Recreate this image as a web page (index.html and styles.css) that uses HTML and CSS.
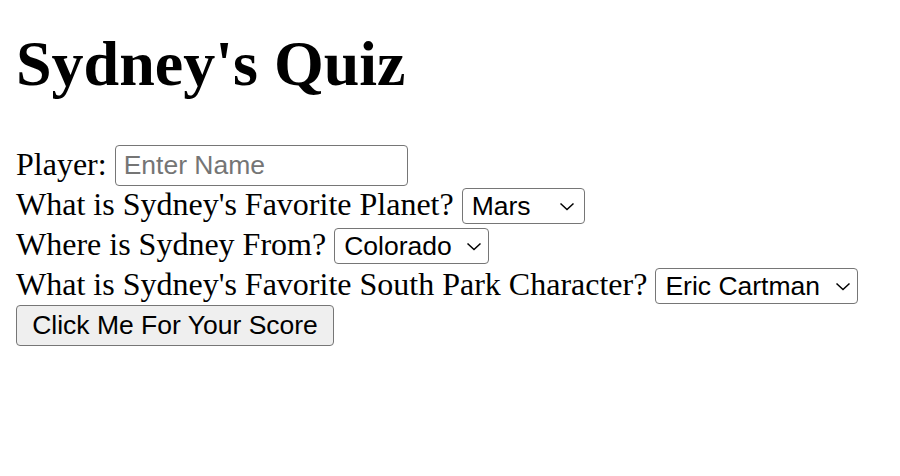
FILE: index.html
```html
<!DOCTYPE html>
<html lang="en">
<head>
<meta charset="utf-8">
<title>Sydney's Quiz</title>
<link rel="stylesheet" href="styles.css">
</head>
<body>
<h1 class="title">Sydney's Quiz</h1>
<form class="quiz">
  <div class="row">
    <label class="label" for="player">Player:</label>
    <input class="field" id="player" type="text" placeholder="Enter Name">
  </div>
  <div class="row">
    <span class="label">What is Sydney's Favorite Planet?</span>
    <span class="select-wrap select-planet">
      <select class="select"><option>Mars</option></select>
      <svg class="chev" viewBox="0 0 16 9" aria-hidden="true"><path d="M1.5 1.5l6.5 6 6.5-6"/></svg>
    </span>
  </div>
  <div class="row">
    <span class="label">Where is Sydney From?</span>
    <span class="select-wrap select-from">
      <select class="select"><option>Colorado</option></select>
      <svg class="chev" viewBox="0 0 16 9" aria-hidden="true"><path d="M1.5 1.5l6.5 6 6.5-6"/></svg>
    </span>
  </div>
  <div class="row">
    <span class="label">What is Sydney's Favorite South Park Character?</span>
    <span class="select-wrap select-char">
      <select class="select"><option>Eric Cartman</option></select>
      <svg class="chev" viewBox="0 0 16 9" aria-hidden="true"><path d="M1.5 1.5l6.5 6 6.5-6"/></svg>
    </span>
  </div>
  <div class="row">
    <button class="btn" type="button">Click Me For Your Score</button>
  </div>
</form>
</body>
</html>
```
FILE: styles.css
```css
html, body {
  margin: 0;
  background: #fff;
}
body {
  padding: 16px;
  font-family: "Liberation Serif", "Times New Roman", serif;
  font-size: 32px;
  color: #000;
}
.title {
  font-size: 64px;
  font-weight: bold;
  line-height: 1.15;
  margin: 11px 0 45px;
}
.quiz {
  display: flex;
  flex-direction: column;
}
.row {
  display: flex;
  align-items: center;
  gap: 8px;
  height: 40px;
}
.label {
  line-height: 1;
  padding-bottom: 3px;
}
.field {
  box-sizing: border-box;
  width: 293px;
  height: 41px;
  margin: 0;
  padding: 0 8px;
  border: 1.5px solid #767676;
  border-radius: 4px;
  font-family: "Liberation Sans", Arial, sans-serif;
  font-size: 26.5px;
  color: #000;
  background: #fff;
}
.field::placeholder {
  color: #757575;
}
.select-wrap {
  position: relative;
  display: inline-flex;
}
.select {
  box-sizing: border-box;
  height: 36px;
  margin: 0;
  padding: 0 0 0 9px;
  border: 1.5px solid #767676;
  border-radius: 4px;
  background: #fff;
  color: #000;
  font-family: "Liberation Sans", Arial, sans-serif;
  font-size: 26.5px;
  appearance: none;
  -webkit-appearance: none;
}
.select-planet .select { width: 123px; }
.select-from .select { width: 155px; }
.select-char .select { width: 203px; }
.chev {
  position: absolute;
  top: 14px;
  right: 7px;
  width: 16px;
  height: 9px;
  fill: none;
  stroke: #000;
  stroke-width: 1.5;
  pointer-events: none;
}
.select-planet .chev { right: 10px; }
.btn {
  box-sizing: border-box;
  width: 318px;
  height: 41px;
  margin: 0;
  padding: 0;
  border: 1.5px solid #767676;
  border-radius: 4px;
  background: #efefef;
  color: #000;
  font-family: "Liberation Sans", Arial, sans-serif;
  font-size: 26.5px;
}
```
